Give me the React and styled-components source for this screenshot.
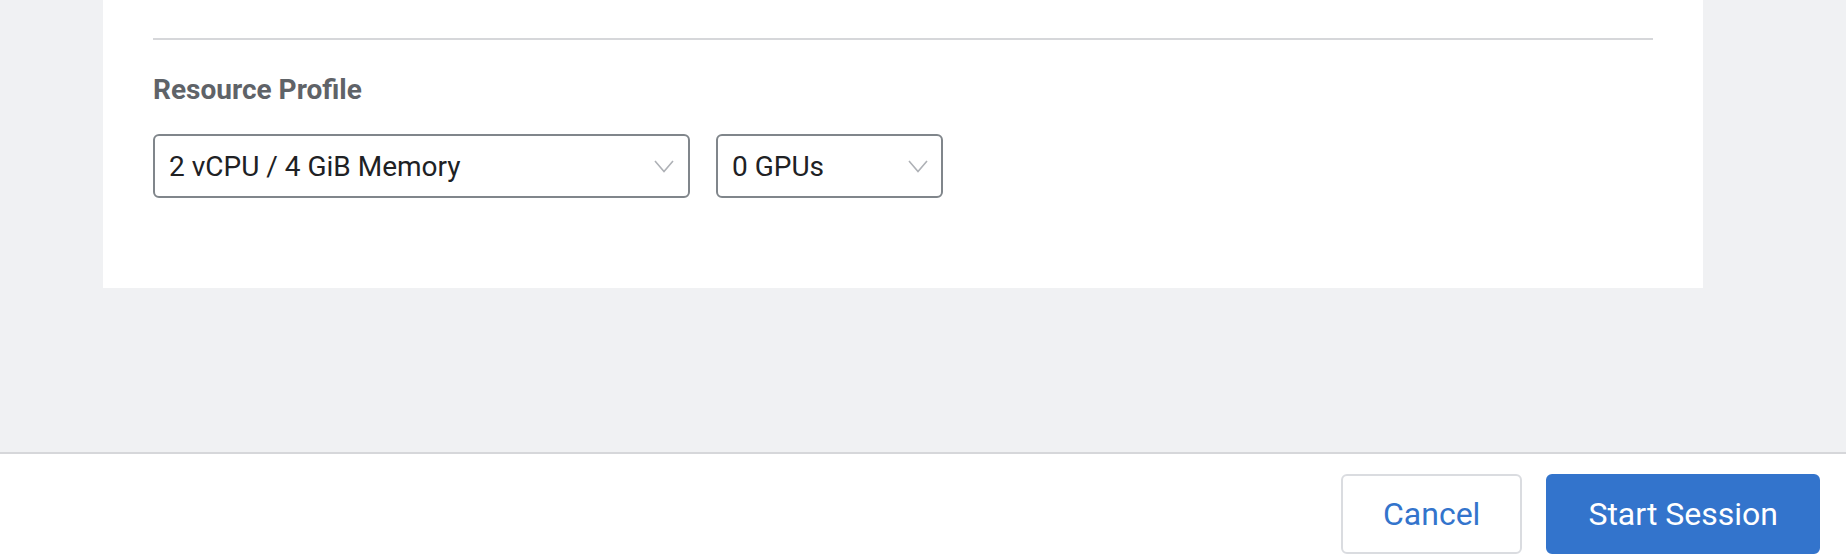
import React from "react";
import styled, { createGlobalStyle } from "styled-components";

const GlobalStyle = createGlobalStyle`
  html, body {
    margin: 0;
    padding: 0;
    background: #f0f1f3;
    font-family: Roboto, "Liberation Sans", Arial, sans-serif;
  }
  * { box-sizing: border-box; }
`;

const Page = styled.div`
  width: 1846px;
  height: 560px;
  display: flex;
  flex-direction: column;
  background: #f0f1f3;
  overflow: hidden;
`;

const Main = styled.main`
  flex: 1;
  padding-left: 103px;
`;

const Card = styled.section`
  width: 1600px;
  background: #ffffff;
  padding: 38px 50px 90px;
`;

const Divider = styled.hr`
  margin: 0;
  border: none;
  height: 2px;
  background: #d6d7da;
`;

const Label = styled.h3`
  margin: 32px 0 0;
  font-size: 28px;
  line-height: 36px;
  font-weight: 700;
  color: #5f6368;
`;

const Row = styled.div`
  display: flex;
  gap: 26px;
  margin-top: 26px;
`;

const Select = styled.div`
  width: ${(p) => p.$width}px;
  height: 64px;
  border: 2px solid #80868b;
  border-radius: 6px;
  background: #fff;
  display: flex;
  align-items: center;
  justify-content: space-between;
  padding: 0 ${(p) => p.$padRight}px 0 14px;
  font-size: 28px;
  color: #202124;
`;

const Chevron = styled.svg`
  width: 20px;
  height: 13px;
  flex-shrink: 0;
`;

const Footer = styled.footer`
  height: 108px;
  background: #fff;
  border-top: 2px solid #d6d7da;
  display: flex;
  justify-content: flex-end;
  align-items: flex-start;
  gap: 24px;
  padding: 20px 26px 0 0;
`;

const Button = styled.button`
  height: 80px;
  border-radius: 6px;
  font-family: Roboto, "Liberation Sans", Arial, sans-serif;
  font-size: 32px;
  font-weight: 400;
  padding: 0 40px;
  border: 2px solid ${(p) => (p.$primary ? "#3374cc" : "#dadce0")};
  background: ${(p) => (p.$primary ? "#3374cc" : "#ffffff")};
  color: ${(p) => (p.$primary ? "#ffffff" : "#3374cc")};
  cursor: pointer;
`;

const ChevronIcon = () => (
  <Chevron viewBox="0 0 20 13">
    <path d="M1 1 L10 11.5 L19 1" fill="none" stroke="#aeb1b6" strokeWidth="1.6" />
  </Chevron>
);

export default function App() {
  return (
    <>
      <GlobalStyle />
      <Page>
        <Main>
          <Card>
            <Divider />
            <Label>Resource Profile</Label>
            <Row>
              <Select $width={537} $padRight={14}>
                <span>2 vCPU / 4 GiB Memory</span>
                <ChevronIcon />
              </Select>
              <Select $width={227} $padRight={13}>
                <span>0 GPUs</span>
                <ChevronIcon />
              </Select>
            </Row>
          </Card>
        </Main>
        <Footer>
          <Button>Cancel</Button>
          <Button $primary>Start Session</Button>
        </Footer>
      </Page>
    </>
  );
}
